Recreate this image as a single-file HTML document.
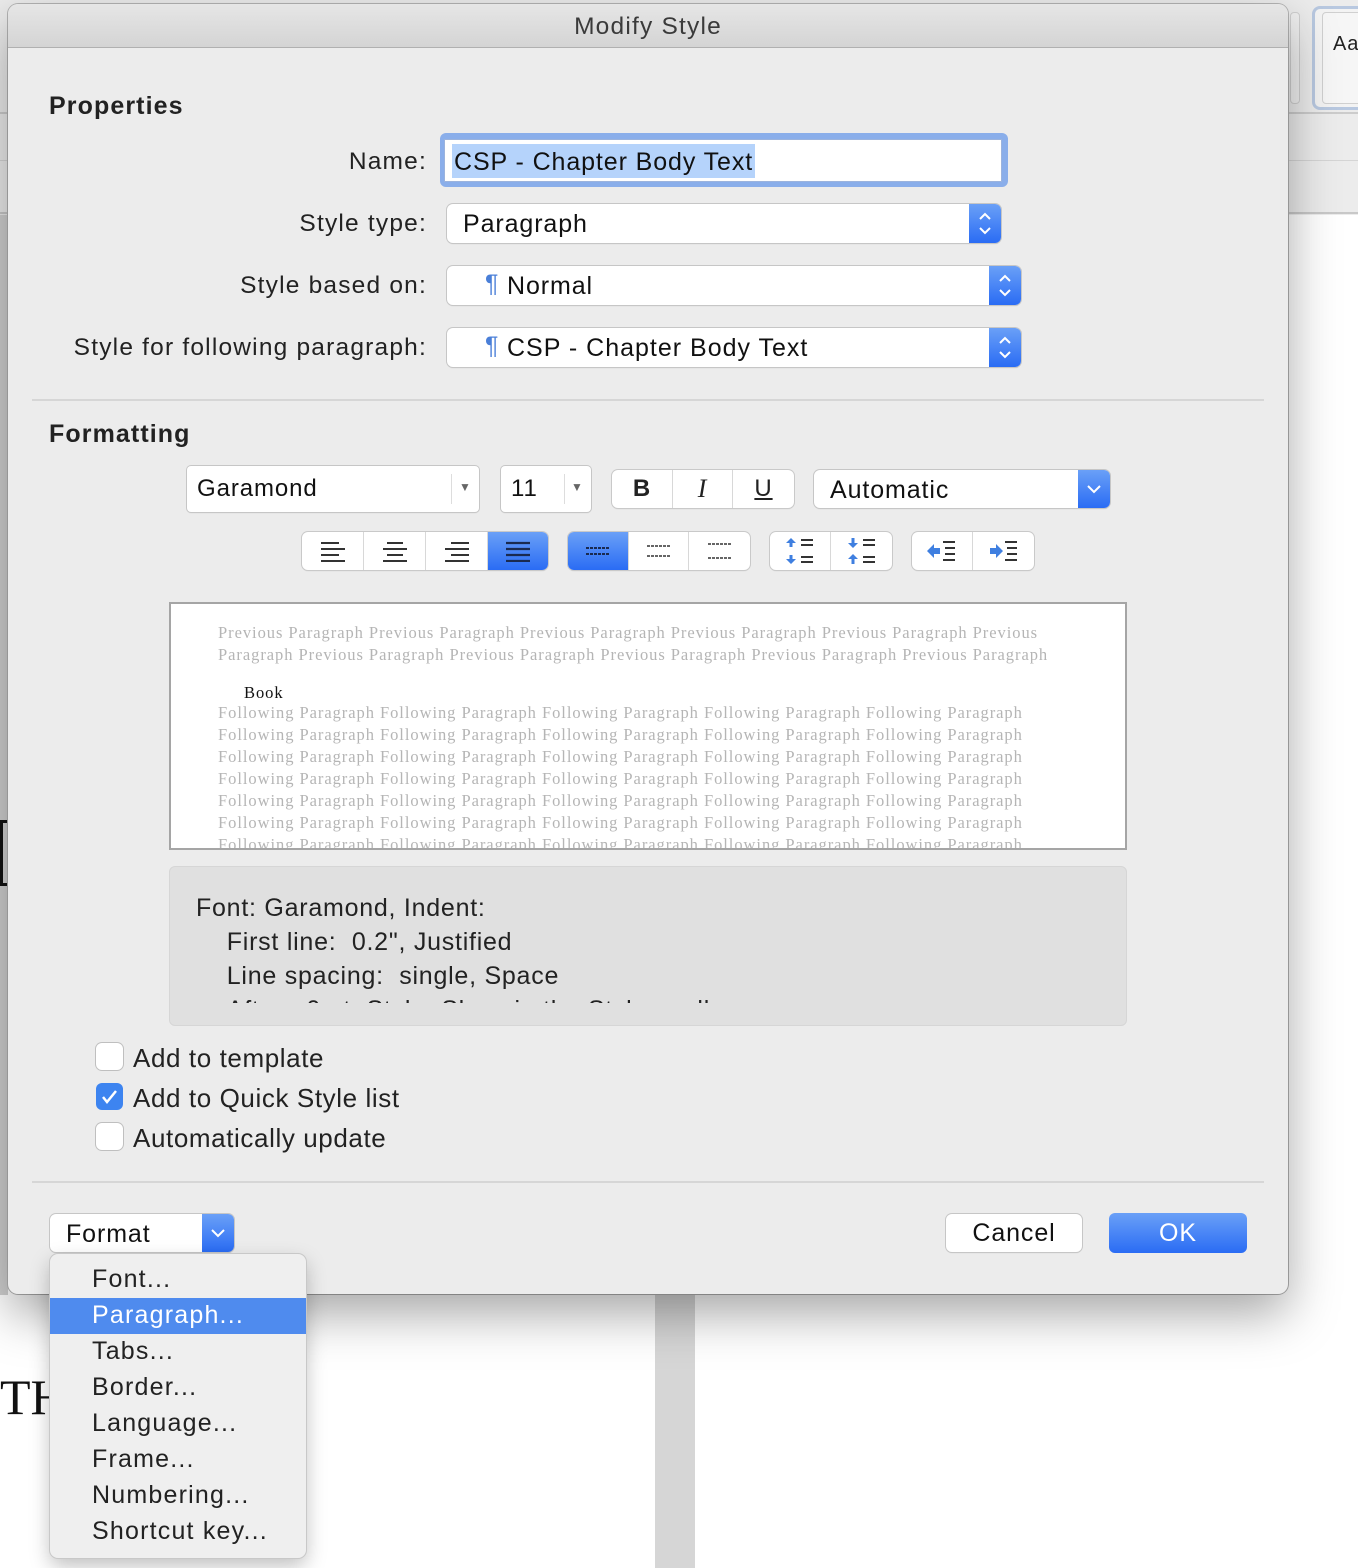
<!DOCTYPE html>
<html><head><meta charset="utf-8"><style>
*{box-sizing:border-box;margin:0;padding:0}
body{width:1358px;height:1568px;position:relative;overflow:hidden;background:#fff;font-family:"Liberation Sans",sans-serif;color:#222;letter-spacing:0.9px}
.a{position:absolute}
.lbl{position:absolute;font-size:24.5px;text-align:right;white-space:nowrap;letter-spacing:1.2px}
.sel{position:absolute;background:#fff;border-radius:6px;box-shadow:0 0 0 1px #c6c6c6,0 1px 1px rgba(0,0,0,.15);font-size:25px;color:#111}
.blue{background:linear-gradient(#6aa0f7,#2a6cf4);}
.arr{position:absolute;right:0;top:0;bottom:0;width:32px;border-radius:0 6px 6px 0}
.seg{position:absolute;display:flex;background:#fff;border-radius:6px;box-shadow:0 0 0 1px #c9c9c9,0 1px 1px rgba(0,0,0,.15);overflow:hidden}
.seg>div{border-right:1px solid #d8d8d8;display:flex;align-items:center;justify-content:center}
.seg>div:last-child{border-right:none}
.chk{position:absolute;left:96px;width:27px;height:27px;border-radius:6px;background:#fff;box-shadow:0 0 0 1px #bfbfbf}
.ck{font-size:26px;position:absolute;left:133px;letter-spacing:0.6px}
.gp{color:#b5b5b5}
.mi{position:absolute;left:92px;font-size:25px;color:#222;letter-spacing:1.2px}
</style></head><body>
<div class="a" style="left:0;top:0;width:1358px;height:215px;background:#ececec"></div>
<div class="a" style="left:0;top:112px;width:1358px;height:2px;background:#ccc"></div>
<div class="a" style="left:0;top:160px;width:1358px;height:1px;background:#d5d5d5"></div>
<div class="a" style="left:0;top:212px;width:1358px;height:2px;background:#c8c8c8"></div>
<div class="a" style="left:1312px;top:6px;width:60px;height:104px;border:3px solid #b8c8e0;border-radius:8px;background:#f3f3f3"></div>
<div class="a" style="left:1322px;top:12px;width:40px;height:92px;border:1px solid #d0d0d0;border-radius:4px;background:#f6f6f6;font-size:20px;padding:20px 0 0 10px">Aa</div>
<div class="a" style="left:1290px;top:12px;width:10px;height:92px;border:1px solid #d0d0d0;border-radius:4px;background:#f1f1f1"></div>
<div class="a" style="left:0;top:215px;width:8px;height:1080px;background:#d0d0d0"></div>
<div class="a" style="left:0;top:820px;width:8px;height:66px;border:3px solid #111;border-right:none"></div>
<div class="a" style="left:655px;top:1294px;width:40px;height:274px;background:#d6d6d6"></div>
<div class="a" style="left:0;top:1368px;font-family:'Liberation Serif',serif;font-size:50px;color:#111;letter-spacing:0">THO</div>

<div class="a" style="left:8px;top:4px;width:1280px;height:1290px;background:#ececec;border-radius:10px;box-shadow:0 20px 50px rgba(0,0,0,.35),0 0 0 1px #b5b5b5;overflow:hidden">
 <div class="a" style="left:0;top:0;width:1280px;height:44px;background:linear-gradient(#e6e6e6,#d4d4d4);border-bottom:1px solid #b0b0b0;text-align:center;font-size:24.5px;line-height:46px;color:#3a3a3a;letter-spacing:1.2px">Modify Style</div>
</div>

<div class="a" style="left:49px;top:92px;font-size:25px;font-weight:bold;color:#222;letter-spacing:1.1px">Properties</div>
<div class="lbl" style="right:931px;top:148px">Name:</div>
<div class="a" style="left:440px;top:133px;width:568px;height:54px;border-radius:6px;background:#8aaeea"></div>
<div class="a" style="left:444px;top:139px;width:558px;height:43px;background:#fff;border:1px solid #9bb3dd"></div>
<div class="a" style="left:452px;top:144px;height:34px;background:#b5d3fb;font-size:25px;line-height:36px;color:#111;padding:0 2px;letter-spacing:0.9px">CSP - Chapter Body Text</div>

<div class="lbl" style="right:931px;top:210px">Style type:</div>
<div class="sel" style="left:447px;top:204px;width:554px;height:39px"><span class="a" style="left:16px;top:6px">Paragraph</span><div class="arr blue"><svg width="32" height="39"><path d="M11 15l5-5 5 5M11 24l5 5 5-5" stroke="#fff" stroke-width="2" fill="none"/></svg></div></div>

<div class="lbl" style="right:931px;top:272px">Style based on:</div>
<div class="sel" style="left:447px;top:266px;width:574px;height:39px"><span class="a" style="left:38px;top:4px;color:#4a7fd8">¶</span><span class="a" style="left:60px;top:6px">Normal</span><div class="arr blue"><svg width="32" height="39"><path d="M11 15l5-5 5 5M11 24l5 5 5-5" stroke="#fff" stroke-width="2" fill="none"/></svg></div></div>

<div class="lbl" style="right:931px;top:334px">Style for following paragraph:</div>
<div class="sel" style="left:447px;top:328px;width:574px;height:39px"><span class="a" style="left:38px;top:4px;color:#4a7fd8">¶</span><span class="a" style="left:60px;top:6px;letter-spacing:1.0px">CSP - Chapter Body Text</span><div class="arr blue"><svg width="32" height="39"><path d="M11 15l5-5 5 5M11 24l5 5 5-5" stroke="#fff" stroke-width="2" fill="none"/></svg></div></div>

<div class="a" style="left:32px;top:399px;width:1232px;height:2px;background:#d6d6d6"></div>

<div class="a" style="left:49px;top:420px;font-size:25px;font-weight:bold;letter-spacing:1.1px">Formatting</div>

<div class="sel" style="left:187px;top:466px;width:292px;height:46px;border-radius:4px"><span class="a" style="left:10px;top:9px;font-size:24px">Garamond</span><div class="a" style="left:264px;top:8px;width:1px;height:30px;background:#ddd"></div><span class="a" style="left:272px;top:14px;font-size:12px;color:#666">▼</span></div>
<div class="sel" style="left:501px;top:466px;width:90px;height:46px;border-radius:4px"><span class="a" style="left:10px;top:9px;font-size:24px">11</span><div class="a" style="left:63px;top:8px;width:1px;height:30px;background:#ddd"></div><span class="a" style="left:70px;top:14px;font-size:12px;color:#666">▼</span></div>

<div class="seg" style="left:612px;top:470px;width:182px;height:38px">
 <div style="width:61px;font-weight:bold;font-size:24px">B</div>
 <div style="width:60px;font-style:italic;font-family:'Liberation Serif',serif;font-size:26px">I</div>
 <div style="width:61px;font-size:24px;text-decoration:underline">U</div>
</div>
<div class="sel" style="left:814px;top:470px;width:296px;height:38px"><span class="a" style="left:16px;top:6px">Automatic</span><div class="arr blue"><svg width="32" height="38"><path d="M10 16l6 6 6-6" stroke="#fff" stroke-width="2" fill="none"/></svg></div></div>

<div class="seg" style="left:302px;top:532px;width:246px;height:38px">
 <div style="width:62px"><svg width="28" height="22"><path d="M2 3h18M2 9h24M2 15h18M2 21h24" stroke="#333" stroke-width="2"/></svg></div>
 <div style="width:62px"><svg width="28" height="22"><path d="M6 3h16M2 9h24M6 15h16M2 21h24" stroke="#333" stroke-width="2"/></svg></div>
 <div style="width:62px"><svg width="28" height="22"><path d="M8 3h18M2 9h24M8 15h18M2 21h24" stroke="#333" stroke-width="2"/></svg></div>
 <div style="width:60px" class="blue"><svg width="28" height="22"><path d="M2 3h24M2 9h24M2 15h24M2 21h24" stroke="#1a2a50" stroke-width="2.2"/></svg></div>
</div>
<div class="seg" style="left:568px;top:532px;width:182px;height:38px">
 <div style="width:61px" class="blue"><svg width="28" height="14"><path d="M2 4h24M2 10h24" stroke="#1a2a50" stroke-width="2" stroke-dasharray="3 1"/></svg></div>
 <div style="width:60px"><svg width="28" height="14"><path d="M2 2h24M2 12h24" stroke="#333" stroke-width="1.6" stroke-dasharray="3 1"/></svg></div>
 <div style="width:61px"><svg width="28" height="18"><path d="M2 2h24M2 16h24" stroke="#333" stroke-width="1.6" stroke-dasharray="3 1"/></svg></div>
</div>
<div class="seg" style="left:770px;top:532px;width:122px;height:38px">
 <div style="width:61px"><svg width="34" height="30"><path d="M8 2l-5 5h10zM8 28l-5-5h10z" fill="#3f7fe0"/><path d="M8 6v5M8 19v5" stroke="#3f7fe0" stroke-width="3"/><path d="M18 4h12M18 9h12M18 21h12M18 26h12" stroke="#333" stroke-width="2"/></svg></div>
 <div style="width:61px"><svg width="34" height="30"><path d="M8 12l-5-5h10zM8 18l5 5H3z" fill="#3f7fe0"/><path d="M8 2v6M8 22v6" stroke="#3f7fe0" stroke-width="3"/><path d="M18 4h12M18 9h12M18 21h12M18 26h12" stroke="#333" stroke-width="2"/></svg></div>
</div>
<div class="seg" style="left:912px;top:532px;width:122px;height:38px">
 <div style="width:61px"><svg width="34" height="24"><path d="M2 12l7-7v4h6v6H9v4z" fill="#3f7fe0"/><path d="M18 3h12M20 9h10M20 15h10M18 21h12" stroke="#333" stroke-width="2"/></svg></div>
 <div style="width:61px"><svg width="34" height="24"><path d="M16 12l-7-7v4H3v6h6v4z" fill="#3f7fe0"/><path d="M18 3h12M20 9h10M20 15h10M18 21h12" stroke="#333" stroke-width="2"/></svg></div>
</div>

<div class="a" style="left:169px;top:602px;width:958px;height:248px;background:#fff;border:2px solid #a5a5a5;overflow:hidden;font-family:'Liberation Serif',serif;font-size:16.5px;line-height:22px;letter-spacing:0.95px">
 <div class="a gp" style="left:47px;top:18px;white-space:nowrap">Previous Paragraph Previous Paragraph Previous Paragraph Previous Paragraph Previous Paragraph Previous<br>Paragraph Previous Paragraph Previous Paragraph Previous Paragraph Previous Paragraph Previous Paragraph</div>
 <div class="a" style="left:73px;top:78px;color:#111">Book</div>
 <div class="a gp" style="left:47px;top:98px;white-space:nowrap">Following Paragraph Following Paragraph Following Paragraph Following Paragraph Following Paragraph<br>Following Paragraph Following Paragraph Following Paragraph Following Paragraph Following Paragraph<br>Following Paragraph Following Paragraph Following Paragraph Following Paragraph Following Paragraph<br>Following Paragraph Following Paragraph Following Paragraph Following Paragraph Following Paragraph<br>Following Paragraph Following Paragraph Following Paragraph Following Paragraph Following Paragraph<br>Following Paragraph Following Paragraph Following Paragraph Following Paragraph Following Paragraph<br>Following Paragraph Following Paragraph Following Paragraph Following Paragraph Following Paragraph</div>
</div>

<div class="a" style="left:169px;top:866px;width:958px;height:160px;background:#e0e0e0;border-radius:6px;border:1px solid #d6d6d6;overflow:hidden;font-size:25px;line-height:34px;color:#222;letter-spacing:0.75px">
 <div class="a" style="left:26px;top:24px;height:112px;overflow:hidden;white-space:nowrap">Font: Garamond, Indent:<br>&nbsp;&nbsp;&nbsp;&nbsp;First line:&nbsp; 0.2", Justified<br>&nbsp;&nbsp;&nbsp;&nbsp;Line spacing:&nbsp; single, Space<br>&nbsp;&nbsp;&nbsp;&nbsp;After:&nbsp; 0 pt, Style: Show in the Styles gallery</div>
</div>

<div class="chk" style="top:1043px"></div><div class="ck" style="top:1043px">Add to template</div>
<div class="chk" style="top:1083px;background:#3d84f0;box-shadow:none"><svg width="27" height="27"><path d="M7 14l4 5 9-11" stroke="#fff" stroke-width="2.5" fill="none"/></svg></div><div class="ck" style="top:1083px">Add to Quick Style list</div>
<div class="chk" style="top:1123px"></div><div class="ck" style="top:1123px">Automatically update</div>

<div class="a" style="left:32px;top:1181px;width:1232px;height:2px;background:#d6d6d6"></div>

<div class="sel" style="left:50px;top:1214px;width:184px;height:38px"><span class="a" style="left:16px;top:6px">Format</span><div class="arr blue" style="width:32px"><svg width="32" height="38"><path d="M10 16l6 6 6-6" stroke="#fff" stroke-width="2" fill="none"/></svg></div></div>

<div class="sel" style="left:946px;top:1214px;width:136px;height:38px;text-align:center;line-height:38px">Cancel</div>
<div class="a blue" style="left:1109px;top:1213px;width:138px;height:40px;border-radius:6px;color:#fff;font-size:25px;text-align:center;line-height:40px">OK</div>

<div class="a" style="left:50px;top:1254px;width:256px;height:304px;background:#efefef;border-radius:8px;box-shadow:0 0 0 1px #c8c8c8,0 8px 20px rgba(0,0,0,.25)"></div>
<div class="a" style="left:50px;top:1298px;width:256px;height:36px;background:#4f8bee"></div>
<div class="mi" style="top:1265px">Font...</div>
<div class="mi" style="top:1301px;color:#fff">Paragraph...</div>
<div class="mi" style="top:1337px">Tabs...</div>
<div class="mi" style="top:1373px">Border...</div>
<div class="mi" style="top:1409px">Language...</div>
<div class="mi" style="top:1445px">Frame...</div>
<div class="mi" style="top:1481px">Numbering...</div>
<div class="mi" style="top:1517px">Shortcut key...</div>
</body></html>
